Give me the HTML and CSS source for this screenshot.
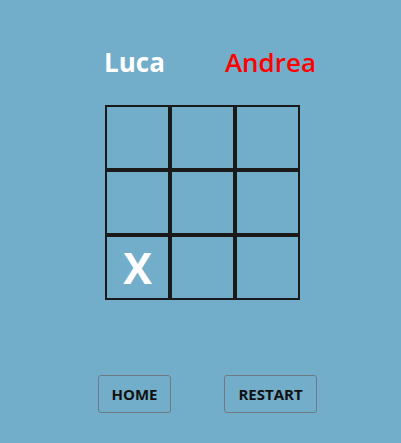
FILE: index.html
```html
<!DOCTYPE html>
<html>
<head>
<meta charset="utf-8">
<link rel="stylesheet" href="styles.css">
</head>
<body>
<div class="app">
  <div class="players">
    <div class="slot"><span class="player p1">Luca</span></div>
    <div class="slot"><span class="player p2">Andrea</span></div>
  </div>
  <div class="board">
    <div class="cell"></div><div class="cell"></div><div class="cell"></div>
    <div class="cell"></div><div class="cell"></div><div class="cell"></div>
    <div class="cell">X</div><div class="cell"></div><div class="cell"></div>
  </div>
  <div class="actions">
    <div class="slot"><button class="btn">HOME</button></div>
    <div class="slot"><button class="btn">RESTART</button></div>
  </div>
</div>
</body>
</html>
```
FILE: styles.css
```css
html, body {
  margin: 0;
  padding: 0;
  background: #72adc9;
  height: 100%;
}
.app {
  box-sizing: border-box;
  width: 401px;
  height: 443px;
  padding-left: 4px;
  display: flex;
  flex-direction: column;
  align-items: center;
  font-family: "Open Sans", "Noto Sans", sans-serif;
}
.players {
  display: flex;
  margin-top: 42px;
  height: 40px;
}
.slot {
  width: 136px;
  display: flex;
  justify-content: center;
}
.player {
  line-height: 40px;
}
.p1 {
  color: #ffffff;
  font-weight: 700;
  font-size: 26px;
}
.p2 {
  color: #ff0000;
  font-weight: 600;
  font-size: 26px;
}
.board {
  margin-top: 23px;
  display: grid;
  grid-template-columns: repeat(3, 65px);
  grid-template-rows: repeat(3, 65px);
}
.cell {
  box-sizing: border-box;
  border: 2px solid #1a1a1a;
  color: #ffffff;
  font-weight: 700;
  font-size: 43px;
  display: flex;
  align-items: center;
  justify-content: center;
  line-height: 1;
}
.actions {
  display: flex;
  margin-top: 75px;
}
.btn {
  box-sizing: border-box;
  height: 38px;
  padding: 0 13px;
  background: transparent;
  border: 1px solid #6f7a82;
  border-radius: 3px;
  font-family: "Open Sans", "Noto Sans", sans-serif;
  font-weight: 700;
  font-size: 15px;
  color: #111;
}
```
